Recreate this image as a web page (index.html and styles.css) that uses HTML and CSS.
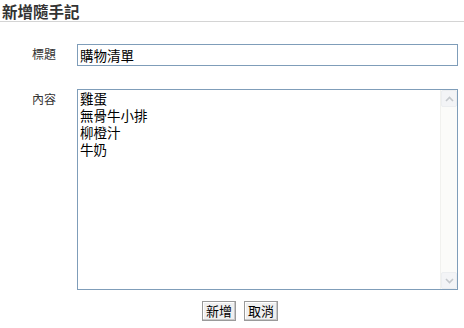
FILE: index.html
```html
<!DOCTYPE html>
<html lang="zh-Hant">
  <head>
    <meta charset="UTF-8" />
    <title>新增隨手記</title>
    <link rel="stylesheet" href="styles.css">
  </head>
  <body>
    <h1 class="page-title">新增隨手記</h1>
    <form class="note-form">
      <label class="field-label" for="title">標題</label>
      <input id="title" class="field-input" value="購物清單" />

      <label class="field-label" for="content">內容</label>
      <div class="memo">
        <textarea id="content" class="memo-text">雞蛋
無骨牛小排
柳橙汁
牛奶</textarea>
        <div class="scrollbar">
          <div class="scroll-btn">
            <svg width="9" height="6" viewBox="0 0 9 6"><path d="M1 5 L4.5 1.5 L8 5" fill="none" stroke="#c4c8cc" stroke-width="1.6"/></svg>
          </div>
          <div class="scroll-track"></div>
          <div class="scroll-btn">
            <svg width="9" height="6" viewBox="0 0 9 6"><path d="M1 1 L4.5 4.5 L8 1" fill="none" stroke="#c4c8cc" stroke-width="1.6"/></svg>
          </div>
        </div>
      </div>

      <div class="actions">
        <button type="button" class="btn">新增</button>
        <button type="button" class="btn">取消</button>
      </div>
    </form>
  </body>
</html>
```

FILE: styles.css
```css
* {
  box-sizing: border-box;
  font-family: "Noto Sans CJK TC", "Liberation Sans", sans-serif;
}

body {
  margin: 0;
  background-color: #fff;
  color: #333;
}

.page-title {
  margin: 0;
  padding: 2px 2px 0;
  font-size: 15.5px;
  line-height: 19px;
  font-weight: bold;
  color: #333;
  border-bottom: 1px solid #d4d4d4;
}

.note-form {
  display: grid;
  grid-template-columns: 45px 381px;
  row-gap: 23px;
  padding: 22px 0 0 32px;
}

.field-label {
  font-size: 12px;
  line-height: 16px;
  padding-top: 2px;
  color: #333;
}

.field-input {
  width: 381px;
  height: 22px;
  margin: 0;
  padding: 0 2px;
  border: 1px solid #7f9db9;
  font-size: 13.5px;
  color: #000;
  outline: none;
}

.memo {
  display: flex;
  width: 381px;
  height: 201px;
  border: 1px solid #7f9db9;
  background-color: #fff;
}

.memo-text {
  flex: 1;
  margin: 0;
  padding: 0 2px;
  border: none;
  resize: none;
  overflow: hidden;
  font-size: 13.5px;
  line-height: 17px;
  color: #000;
  outline: none;
}

.scrollbar {
  display: flex;
  flex-direction: column;
  width: 17px;
  background-color: #fbfbf9;
  border-left: 1px solid #f1f1ee;
}

.scroll-btn {
  display: flex;
  align-items: center;
  justify-content: center;
  height: 17px;
  background-color: #f3f4f6;
  border: 1px solid #eceef0;
  border-radius: 2px;
}

.scroll-track {
  flex: 1;
}

.actions {
  grid-column: 1 / 3;
  display: flex;
  gap: 8px;
  margin-top: -12px;
  padding-left: 170px;
}

.btn {
  height: 20px;
  padding: 0 3px;
  font-size: 13px;
  line-height: 16px;
  color: #000;
  background-color: #f0f0f0;
  border: 1px solid #9a9a9a;
  border-radius: 0;
  box-shadow: inset -1px -1px 0 #c8c8c8, inset 1px 1px 0 #fff;
}
```
